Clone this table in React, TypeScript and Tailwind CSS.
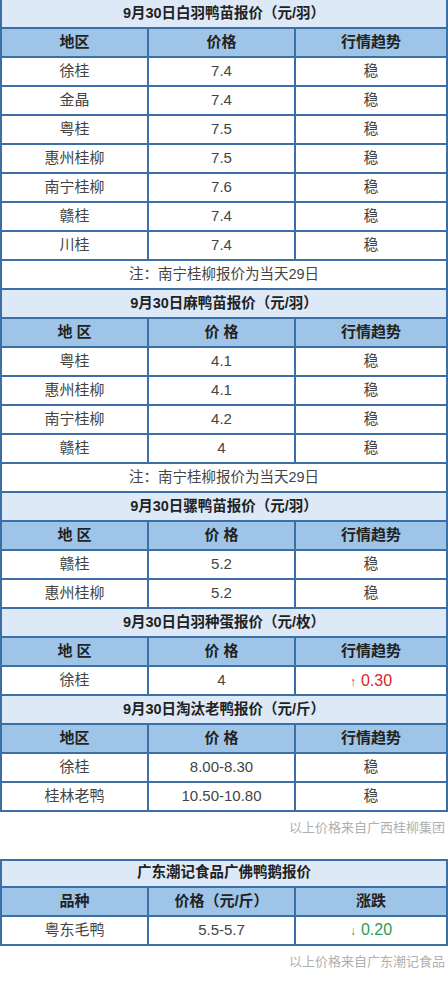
import React from "react";

type Cell = string | { text: string; tone: "up" | "down" };

const B = "border-[#3b6fa6]";

const Title = ({ text, top }: { text: string; top?: boolean }) => (
  <div
    className={`flex h-[29px] items-center justify-center border-x-2 border-b-2 ${B} bg-[#dde9f6] text-[14.5px] font-bold text-[#222] ${
      top ? "border-t-2" : ""
    }`}
  >
    {text}
  </div>
);

const Note = ({ text }: { text: string }) => (
  <div
    className={`flex h-[29px] items-center justify-center border-x-2 border-b-2 ${B} bg-white text-[14.5px] text-[#444]`}
  >
    {text}
  </div>
);

const Trend = ({ cell }: { cell: Cell }) => {
  if (typeof cell === "string") return <>{cell}</>;
  const up = cell.tone === "up";
  return (
    <span
      className={`flex items-baseline gap-[5px] ${
        up ? "text-[#d7262c]" : "text-[#2d9b53]"
      }`}
    >
      <span className="text-[12px]">{up ? "↑" : "↓"}</span>
      <span className="text-[16px]">{cell.text}</span>
    </span>
  );
};

const Row = ({ cells, head }: { cells: Cell[]; head?: boolean }) => (
  <div
    className={`flex h-[29px] border-x-2 border-b-2 ${B} ${
      head ? "bg-[#9ec4e7] font-bold text-[#222]" : "bg-white text-[#444]"
    } text-[15px]`}
  >
    <div className={`flex w-[147px] items-center justify-center border-r-2 ${B}`}>
      {cells[0]}
    </div>
    <div className={`flex w-[147px] items-center justify-center border-r-2 ${B}`}>
      {cells[1]}
    </div>
    <div className="flex flex-1 items-center justify-center">
      <Trend cell={cells[2]} />
    </div>
  </div>
);

const Source = ({ text }: { text: string }) => (
  <div className="pr-[3px] pt-[6px] text-right text-[13px] text-[#b0b0b0]">{text}</div>
);

export default function App() {
  return (
    <div
      className="w-[448px] min-h-[995px] bg-white"
      style={{ fontFamily: '"Liberation Sans", "Noto Sans CJK SC", sans-serif' }}
    >
      <Title text="9月30日白羽鸭苗报价（元/羽）" />
      <Row head cells={["地区", "价格", "行情趋势"]} />
      <Row cells={["徐桂", "7.4", "稳"]} />
      <Row cells={["金晶", "7.4", "稳"]} />
      <Row cells={["粤桂", "7.5", "稳"]} />
      <Row cells={["惠州桂柳", "7.5", "稳"]} />
      <Row cells={["南宁桂柳", "7.6", "稳"]} />
      <Row cells={["赣桂", "7.4", "稳"]} />
      <Row cells={["川桂", "7.4", "稳"]} />
      <Note text="注：南宁桂柳报价为当天29日" />

      <Title text="9月30日麻鸭苗报价（元/羽）" />
      <Row head cells={["地 区", "价 格", "行情趋势"]} />
      <Row cells={["粤桂", "4.1", "稳"]} />
      <Row cells={["惠州桂柳", "4.1", "稳"]} />
      <Row cells={["南宁桂柳", "4.2", "稳"]} />
      <Row cells={["赣桂", "4", "稳"]} />
      <Note text="注：南宁桂柳报价为当天29日" />

      <Title text="9月30日骡鸭苗报价（元/羽）" />
      <Row head cells={["地 区", "价 格", "行情趋势"]} />
      <Row cells={["赣桂", "5.2", "稳"]} />
      <Row cells={["惠州桂柳", "5.2", "稳"]} />

      <Title text="9月30日白羽种蛋报价（元/枚）" />
      <Row head cells={["地 区", "价 格", "行情趋势"]} />
      <Row cells={["徐桂", "4", { text: "0.30", tone: "up" }]} />

      <Title text="9月30日淘汰老鸭报价（元/斤）" />
      <Row head cells={["地区", "价 格", "行情趋势"]} />
      <Row cells={["徐桂", "8.00-8.30", "稳"]} />
      <Row cells={["桂林老鸭", "10.50-10.80", "稳"]} />
      <Source text="以上价格来自广西桂柳集团" />

      <div className="h-[21px]" />
      <Title top text="广东潮记食品广佛鸭鹅报价" />
      <Row head cells={["品种", "价格（元/斤）", "涨跌"]} />
      <Row cells={["粤东毛鸭", "5.5-5.7", { text: "0.20", tone: "down" }]} />
      <Source text="以上价格来自广东潮记食品" />
    </div>
  );
}
